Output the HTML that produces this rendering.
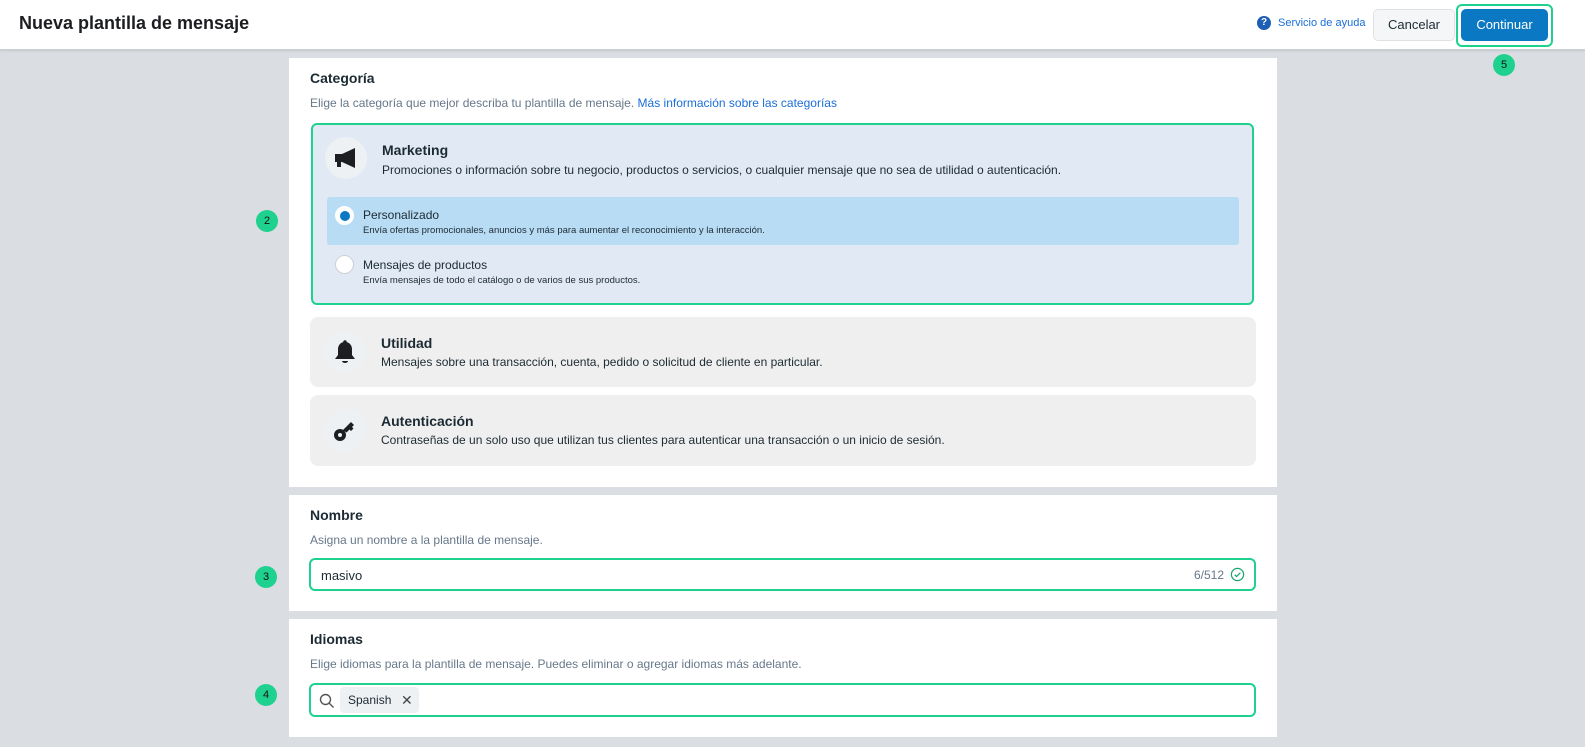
<!DOCTYPE html>
<html><head><meta charset="utf-8"><style>
*{box-sizing:border-box;margin:0;padding:0}
body{width:1585px;height:747px;overflow:hidden;background:#dadde1;font-family:"Liberation Sans",sans-serif;color:#1c2b33;position:relative}
.hdr{position:absolute;left:0;top:0;width:1585px;height:50px;background:#fff;border-bottom:1px solid #cbd0d5;box-shadow:0 1px 2px rgba(0,0,0,.1)}
.hdr h1{position:absolute;left:19px;top:13px;font-size:18px;font-weight:bold;color:#1c1e21}
.help{position:absolute;left:1257px;top:16px;font-size:11px;color:#1a6ed8;display:flex;align-items:center;gap:7px}
.help i{width:14px;height:14px;border-radius:50%;background:#1c5fb5;color:#fff;font-style:normal;font-size:10px;font-weight:bold;text-align:center;line-height:14px}
.btn{position:absolute;top:9px;height:32px;border-radius:5px;font-size:13px;text-align:center;line-height:30px}
.cancel{left:1373px;width:82px;background:#f5f6f7;border:1px solid #dfe1e5;color:#1c2b33}
.cont{left:1461px;width:87px;background:#0a78c2;color:#fff;border:1px solid #0a78c2}
.hl{position:absolute;border:2px solid #1ed18f;border-radius:6px}
.num{position:absolute;width:22px;height:22px;border-radius:50%;background:#1ed18f;font-size:11px;text-align:center;line-height:22px;color:#111}
.card{position:absolute;left:289px;width:988px;background:#fff}
.t{position:absolute;left:21px;font-size:14px;font-weight:bold;color:#1c2b33}
.s{position:absolute;left:21px;font-size:12px;color:#67788a}
.s a{color:#1a6ed8;text-decoration:none}
.box{position:absolute;border-radius:8px}
.ic{position:absolute;left:14px;width:42px;height:42px;border-radius:50%;background:#eef1f4}
.bt{position:absolute;left:71px;font-size:14px;font-weight:bold}
.bd{position:absolute;left:71px;font-size:12px;color:#1c2b33}
.radio{position:absolute;left:8px;width:19px;height:19px;border-radius:50%;background:#fff;border:1px solid #ccd0d5}
.rt{position:absolute;left:36px;font-size:12px}
.rd{position:absolute;left:36px;font-size:9.5px}
</style></head><body>
<div class="hdr"><h1>Nueva plantilla de mensaje</h1>
<div class="help"><i>?</i>Servicio de ayuda</div>
<div class="btn cancel">Cancelar</div>
<div class="btn cont">Continuar</div>
</div>
<div class="hl" style="left:1456px;top:4px;width:97px;height:43px"></div>
<div class="num" style="left:1493px;top:54px">5</div>

<div class="card" style="top:58px;height:429px">
<div class="t" style="top:12px">Categoría</div>
<div class="s" style="top:38px">Elige la categoría que mejor describa tu plantilla de mensaje. <a>Más información sobre las categorías</a></div>
<div class="box" style="left:22px;top:65px;width:943px;height:182px;background:#e1e9f4;border:2px solid #1ed18f;border-radius:6px">
 <div class="ic" style="left:12px;top:12px"><svg width="42" height="42" viewBox="0 0 42 42"><path d="M10 17h7l13-6v20l-13-6h-1v5h-4v-5h-2z" fill="#1c1e21"/></svg></div>
 <div class="bt" style="left:69px;top:17px">Marketing</div>
 <div class="bd" style="left:69px;top:38px">Promociones o información sobre tu negocio, productos o servicios, o cualquier mensaje que no sea de utilidad o autenticación.</div>
 <div style="position:absolute;left:14px;top:72px;width:912px;height:48px;background:#b9dcf5;border-radius:3px">
  <div class="radio" style="top:9px;border-color:#fff"><div style="position:absolute;left:4px;top:4px;width:10px;height:10px;border-radius:50%;background:#0a78c2"></div></div>
  <div class="rt" style="top:11px">Personalizado</div>
  <div class="rd" style="top:28px">Envía ofertas promocionales, anuncios y más para aumentar el reconocimiento y la interacción.</div>
 </div>
 <div class="radio" style="left:22px;top:130px"></div>
 <div class="rt" style="left:50px;top:133px">Mensajes de productos</div>
 <div class="rd" style="left:50px;top:150px">Envía mensajes de todo el catálogo o de varios de sus productos.</div>
</div>
<div class="box" style="left:21px;top:259px;width:946px;height:70px;background:#efefef">
 <div class="ic" style="top:14px"><svg width="42" height="42" viewBox="0 0 42 42"><path d="M21 11c-5 0-7 4-7 7v6l-3 4h20l-3-4v-6c0-3-2-7-7-7z" fill="#1c1e21"/><circle cx="21" cy="11" r="1.8" fill="#1c1e21"/><path d="M18 30h6a3 2 0 0 1-6 0z" fill="#1c1e21"/></svg></div>
 <div class="bt" style="top:18px">Utilidad</div>
 <div class="bd" style="top:38px">Mensajes sobre una transacción, cuenta, pedido o solicitud de cliente en particular.</div>
</div>
<div class="box" style="left:21px;top:337px;width:946px;height:71px;background:#efefef">
 <div class="ic" style="top:14px"><svg width="42" height="42" viewBox="0 0 42 42"><circle cx="16" cy="26" r="6" fill="#1c1e21"/><circle cx="16" cy="26" r="2" fill="#eef1f4"/><path d="M19 21l8-8 3 3-2 2 1.5 1.5-2.5 2.5-1.5-1.5-3 3z" fill="#1c1e21"/></svg></div>
 <div class="bt" style="top:18px">Autenticación</div>
 <div class="bd" style="top:38px">Contraseñas de un solo uso que utilizan tus clientes para autenticar una transacción o un inicio de sesión.</div>
</div>
</div>
<div class="num" style="left:256px;top:210px">2</div>

<div class="card" style="top:495px;height:116px">
<div class="t" style="top:12px">Nombre</div>
<div class="s" style="top:38px">Asigna un nombre a la plantilla de mensaje.</div>
<div class="hl" style="left:20px;top:63px;width:947px;height:33px"><span style="position:absolute;left:10px;top:8px;font-size:13px">masivo</span><span style="position:absolute;right:30px;top:8px;font-size:12px;color:#67788a">6/512</span><svg style="position:absolute;right:9px;top:7px" width="15" height="15" viewBox="0 0 16 16"><circle cx="8" cy="8" r="6.5" fill="none" stroke="#1aa36b" stroke-width="1.3"/><path d="M5 8.2l2 2 4-4" fill="none" stroke="#1aa36b" stroke-width="1.3"/></svg></div>
</div>
<div class="num" style="left:255px;top:566px">3</div>

<div class="card" style="top:619px;height:118px">
<div class="t" style="top:12px">Idiomas</div>
<div class="s" style="top:38px">Elige idiomas para la plantilla de mensaje. Puedes eliminar o agregar idiomas más adelante.</div>
<div class="hl" style="left:20px;top:64px;width:947px;height:34px">
<svg style="position:absolute;left:8px;top:8px" width="16" height="16" viewBox="0 0 16 16"><circle cx="6.5" cy="6.5" r="5" fill="none" stroke="#555" stroke-width="1.4"/><path d="M10 10l4.5 4.5" stroke="#555" stroke-width="1.4"/></svg>
<div style="position:absolute;left:29px;top:2px;width:79px;height:26px;background:#eef1f4;border-radius:4px;font-size:12px;line-height:26px;padding-left:8px">Spanish<span style="position:absolute;left:61px;top:0;font-size:14px;color:#444">✕</span></div>
</div>
</div>
<div class="num" style="left:255px;top:684px">4</div>
</body></html>
